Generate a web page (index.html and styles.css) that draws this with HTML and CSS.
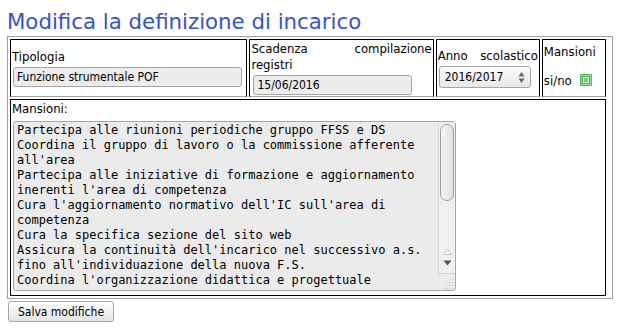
FILE: index.html
```html
<!DOCTYPE html>
<html lang="it">
<head>
  <meta charset="UTF-8" />
  <title>Modifica la definizione di incarico</title>
  <link rel="stylesheet" href="styles.css">
</head>
<body>
  <h2 class="title">Modifica la definizione di incarico</h2>

  <form class="edit-form">
    <table class="grid">
      <tr>
        <td class="cell cell-tipo">Tipologia <input class="field field-tipo" type="text" value="Funzione strumentale POF" readonly></td>
        <td class="cell cell-scad">Scadenza compilazione registri <input class="field field-date" type="text" value="15/06/2016" readonly></td>
        <td class="cell cell-anno">Anno scolastico <span class="select">2016/2017
            <svg class="spin" width="7" height="13" viewBox="0 0 7 13">
              <path d="M3.5 1 L6.5 5.5 L0.5 5.5 Z" fill="#666"/>
              <path d="M3.5 12 L6.5 7.5 L0.5 7.5 Z" fill="#666"/>
            </svg></span></td>
        <td class="cell cell-mans">Mansioni si/no <svg class="check" width="12" height="12" viewBox="0 0 12 12">
            <rect x="0.5" y="0.5" width="11" height="11" fill="#8fdc8f" stroke="#62bb62"/>
            <rect x="2.5" y="2.5" width="7" height="7" fill="#f6fff6" stroke="#58b058"/>
            <path d="M4 4 L8 8 M8 4 L4 8" stroke="#5aaa5a" stroke-width="1.2"/>
          </svg></td>
      </tr>
      <tr>
        <td class="cell cell-text" colspan="4">
          <div class="text-label">Mansioni:</div>
          <div class="textarea">
            <div class="ta-text">Partecipa alle riunioni periodiche gruppo FFSS e DS
Coordina il gruppo di lavoro o la commissione afferente all'area
Partecipa alle iniziative di formazione e aggiornamento inerenti l'area di competenza
Cura l'aggiornamento normativo dell'IC sull'area di competenza
Cura la specifica sezione del sito web
Assicura la continuità dell'incarico nel successivo a.s. fino all'individuazione della nuova F.S.
Coordina l'organizzazione didattica e progettuale</div>
            <div class="ta-bar">
              <div class="ta-track">
                <div class="ta-thumb"></div>
                <div class="ta-space"></div>
                <svg class="ta-arrow" width="9" height="6" viewBox="0 0 9 6"><path d="M4.5 0.5 L8.5 5.5 L0.5 5.5 Z" fill="#fff" stroke="#c4c4c4"/></svg>
                <svg class="ta-arrow" width="9" height="6" viewBox="0 0 9 6"><path d="M0.5 0.5 L8.5 0.5 L4.5 5.5 Z" fill="#555"/></svg>
              </div>
              <svg class="ta-grip" width="10" height="10" viewBox="0 0 10 10">
                <rect x="8" y="0" width="1" height="1" fill="#bbb"/>
                <rect x="5" y="3" width="1" height="1" fill="#bbb"/>
                <rect x="8" y="3" width="1" height="1" fill="#bbb"/>
                <rect x="2" y="6" width="1" height="1" fill="#bbb"/>
                <rect x="5" y="6" width="1" height="1" fill="#bbb"/>
                <rect x="8" y="6" width="1" height="1" fill="#bbb"/>
                <rect x="0" y="9" width="1" height="1" fill="#bbb"/>
                <rect x="2" y="9" width="1" height="1" fill="#bbb"/>
                <rect x="5" y="9" width="1" height="1" fill="#bbb"/>
                <rect x="8" y="9" width="1" height="1" fill="#bbb"/>
              </svg>
            </div>
          </div>
        </td>
      </tr>
    </table>

    <button class="save" type="button">Salva modifiche</button>
  </form>
</body>
</html>
```

FILE: styles.css
```css
body { margin: 0; padding: 0 7px; font-family: "DejaVu Sans Condensed", "Liberation Sans", sans-serif; font-size: 13px; color: #000; background: #fff; }
.title { margin: 10px 0 2px; font-family: "DejaVu Sans", sans-serif; font-size: 21.3px; line-height: 24px; font-weight: normal; color: #3355cc; }

.grid { width: 606px; table-layout: fixed; border-collapse: separate; border-spacing: 2px; border: 1px solid #a0a0a0; padding-right: 4px; }
.cell { box-sizing: border-box; padding: 1px; border: 1px solid #000; border-bottom-color: #a0a0a0; text-align: justify; line-height: 16px; vertical-align: middle; }
.cell-tipo { width: 237px; }
.cell-scad { width: 184px; }
.cell-anno { width: 104px; }
.cell-mans { width: 64px; padding-top: 4px; vertical-align: top; }
.cell-text { border-bottom-color: #000; vertical-align: top; }

.field { box-sizing: border-box; height: 20px; margin: 2px 0 0 1px; padding: 0 3px; border: 1px solid #a5a5a5; border-radius: 3px; background: #ececec; font: 12px "DejaVu Sans Condensed", "Liberation Sans", sans-serif; color: #000; vertical-align: bottom; }
.field-tipo { width: 229px; }
.field-date { width: 159px; margin-left: 2px; }

.select { box-sizing: border-box; display: inline-flex; align-items: center; justify-content: space-between; width: 92px; height: 22px; margin: 2px 0 0 1px; padding: 0 5px 0 5px; border: 1px solid #a5a5a5; border-radius: 3px; background: linear-gradient(#fafafa, #e8e8e8); font-size: 12px; vertical-align: bottom; }

.check { margin: 14px 0 0 5px; vertical-align: -1px; }

.textarea { box-sizing: border-box; display: flex; width: 443px; height: 170px; margin: 4px 0 3px 1px; border: 1px solid #a5a5a5; border-radius: 3px; background: #ebebeb; }
.ta-text { flex: 1; padding: 1px 3px; overflow: hidden; font: 12px/15px "DejaVu Sans Mono", monospace; white-space: pre-wrap; text-align: left; }
.ta-bar { display: flex; flex-direction: column; width: 17px; }
.ta-track { flex: 1; display: flex; flex-direction: column; align-items: center; padding: 2px 0 7px; border-left: 1px solid #d6d6d6; border-bottom: 1px solid #d0d0d0; background: #f0f0f0; }
.ta-thumb { box-sizing: border-box; width: 14px; height: 77px; border: 1px solid #9c9c9c; border-radius: 7px; background: linear-gradient(90deg, #f6f6f6, #e0e0e0); }
.ta-space { flex: 1; }
.ta-arrow { margin-top: 5px; }
.ta-grip { align-self: flex-end; margin: 5px 1px 1px 0; }

.save { box-sizing: border-box; width: 106px; height: 21px; margin: 2px 0 0 1px; padding: 0; border: 1px solid #a8a8a8; border-radius: 3px; background: linear-gradient(#ffffff, #e4e4e4); font: 12px "DejaVu Sans Condensed", "Liberation Sans", sans-serif; color: #000; }
```
